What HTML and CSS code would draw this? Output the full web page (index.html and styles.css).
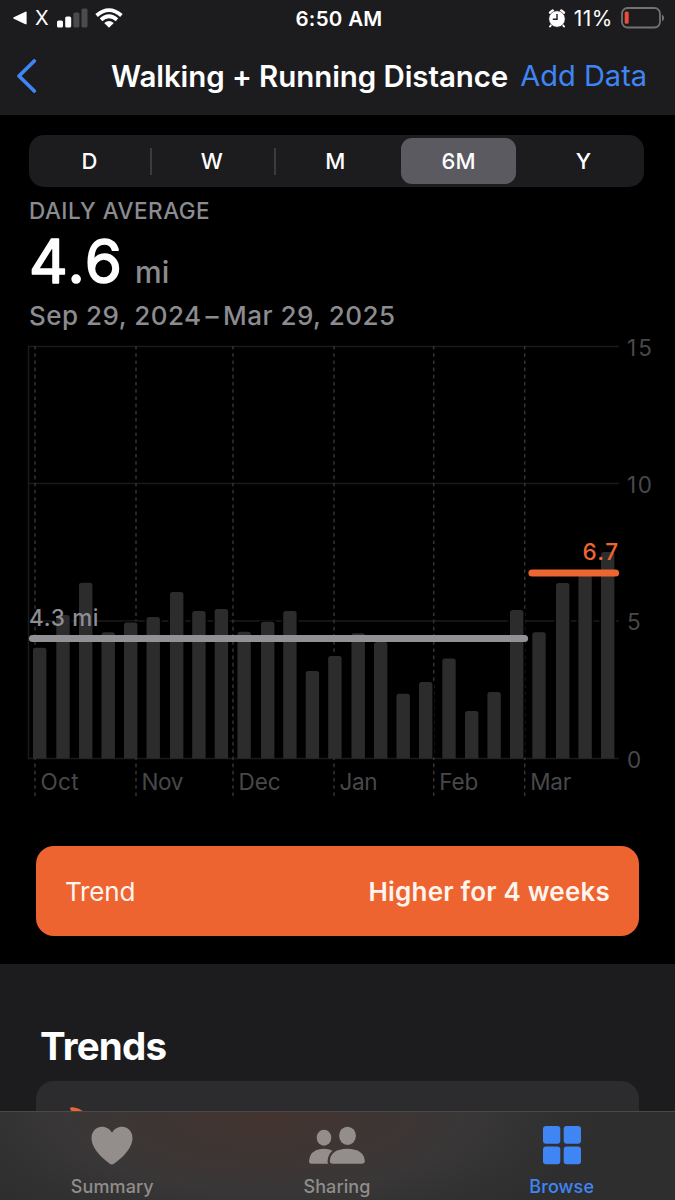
FILE: index.html
```html
<!DOCTYPE html>
<html lang="en">
<head>
    <meta charset="UTF-8">
    <meta name="viewport" content="width=device-width, initial-scale=1.0">
    <title>Walking + Running Distance</title>
    <link rel="stylesheet" href="styles.css">
</head>
<body>
    <header>
        <div class="status-bar">
            <div class="status-left">
                <svg width="14" height="14" viewBox="0 0 14 14"><path d="M0.8 6.2L12.4 0.7Q13.6 0.3 13.6 1.5V12.5Q13.6 13.7 12.4 13.2L0.8 7.8Q-.4 7 .8 6.2Z" fill="#fff"/></svg>
                <span class="back-app">X</span>
                <svg class="signal" width="31" height="20" viewBox="0 0 31 20">
                    <rect x="0" y="12.5" width="6" height="7" rx="1.6" fill="#fff"/>
                    <rect x="8.2" y="8.5" width="6" height="11" rx="1.6" fill="#fff"/>
                    <rect x="16.4" y="4.5" width="6" height="15" rx="1.6" fill="#4b4b4d"/>
                    <rect x="24.5" y="0.5" width="6" height="19" rx="1.6" fill="#4b4b4d"/>
                </svg>
                <svg class="wifi" width="28" height="20" viewBox="0 0 28 20">
                    <path d="M1.6 7.5Q14-3.2 26.4 7.5M6 11.8Q14 4.8 22 11.8" fill="none" stroke="#fff" stroke-width="3.8"/>
                    <path d="M14 19.7L9.2 14.9Q14 11 18.8 14.9Z" fill="#fff"/>
                </svg>
            </div>
            <span class="time">6:50 AM</span>
            <div class="status-right">
                <svg width="18" height="19" viewBox="0 0 18 19">
                    <path d="M2.4 3.6L4.6 1.8M15.6 3.6L13.4 1.8" stroke="#fff" stroke-width="3" stroke-linecap="round"/>
                    <path d="M4 15L2 17.5M14 15L16 17.5" stroke="#fff" stroke-width="2" stroke-linecap="round"/>
                    <circle cx="9" cy="10" r="8.2" fill="#fff" stroke="#1c1c1e" stroke-width=".6"/>
                    <path d="M9 5V10.2H4.8" fill="none" stroke="#1c1c1e" stroke-width="1.4"/>
                </svg>
                <span class="percent">11%</span>
                <svg width="44" height="22" viewBox="0 0 44 22">
                    <rect x="1" y="1" width="38" height="19.5" rx="5.5" fill="none" stroke="#727274" stroke-width="1.8"/>
                    <rect x="3.7" y="4.5" width="4" height="12.3" rx="1.5" fill="#eb4d3d"/>
                    <path d="M41 7.5Q43.2 8.5 43.2 11Q43.2 13.2 41 14.3Z" fill="#727274"/>
                </svg>
            </div>
        </div>
        <nav class="nav-bar">
            <svg class="back" width="22" height="36" viewBox="0 0 22 36"><path d="M18.3 3L3 18L18.3 33" fill="none" stroke="#3f85f4" stroke-width="3.8" stroke-linecap="round" stroke-linejoin="round"/></svg>
            <h1>Walking + Running Distance</h1>
            <a class="add-data">Add Data</a>
        </nav>
    </header>

    <main>
        <div class="range">
            <div class="range-item">D</div>
            <div class="range-item divided">W</div>
            <div class="range-item divided">M</div>
            <div class="range-item selected">6M</div>
            <div class="range-item">Y</div>
        </div>
        <div class="label">DAILY AVERAGE</div>
        <svg class="value" width="160" height="76" viewBox="0 -8 160 76">
            <text class="number" x="0" y="52" textLength="93">4.6</text>
            <text class="unit" x="106" y="52">mi</text>
        </svg>
        <div class="dates">Sep 29, 2024<span class="dash">–</span>Mar 29, 2025</div>

        <svg class="chart" id="chart" width="675" height="484" viewBox="0 330 675 484"></svg>

        <div class="trend">
            <span class="trend-name">Trend</span>
            <span class="trend-text">Higher for 4 weeks</span>
        </div>
    </main>

    <section class="trends">
        <h2>Trends</h2>
        <div class="card">
            <svg width="30" height="30" viewBox="0 0 30 30"><path d="M0 1.5Q0 0 3 .2Q14 1.5 19 12L8 16Z" fill="#ed6631"/></svg>
        </div>
    </section>

    <footer class="tab-bar">
        <div class="tab">
            <svg width="42" height="40" viewBox="0 0 42 40"><path d="M21 38.7C17 37 .5 24.5 .5 12.2C.5 5 5.5 .8 11 .8C15.5 .8 19 3.2 21 6.8C23 3.2 26.5 .8 31 .8C36.5 .8 41.5 5 41.5 12.2C41.5 24.5 25 37 21 38.7Z" fill="#938e8c"/></svg>
            <span>Summary</span>
        </div>
        <div class="tab">
            <svg width="58" height="40" viewBox="0 0 58 40" fill="#938e8c">
                <ellipse cx="16" cy="11.7" rx="7.3" ry="8"/>
                <ellipse cx="39.5" cy="9.8" rx="8.4" ry="9.1"/>
                <path d="M1 35Q1.5 24.5 13 22.9Q20 22.3 24.5 24.8Q19.7 28.8 19.5 35.5Q19.5 37 20.3 37.8H3.5Q1 37.8 1 35Z"/>
                <path d="M21.8 35Q22.5 23 39.3 22.7Q56 23 56.8 35Q56.8 37.8 53.8 37.8H24.8Q21.8 37.8 21.8 35Z"/>
            </svg>
            <span>Sharing</span>
        </div>
        <div class="tab active">
            <svg width="38" height="40" viewBox="0 0 38 40" fill="#3f85f4">
                <rect x="0" y="0" width="17.3" height="17.8" rx="3"/>
                <rect x="20.7" y="0" width="17.3" height="17.8" rx="3"/>
                <rect x="0" y="20.6" width="17.3" height="17.6" rx="3"/>
                <rect x="20.7" y="20.6" width="17.3" height="17.6" rx="3"/>
            </svg>
            <span>Browse</span>
        </div>
    </footer>

    <script src="chart.js"></script>
</body>
</html>
```

FILE: chart.js
```js
const chart = document.getElementById('chart');
const base = 758.5;

// Left edge and top of each weekly bar
const bars = [
    [33, 647.7], [56.3, 615], [79, 582.8], [101.5, 632.3], [124, 622.5], [146.5, 617],
    [170, 592], [192.2, 611], [214.7, 609], [237.4, 631.7], [261, 621.7], [283.2, 611],
    [305.7, 671], [328.2, 656], [351.5, 633.3], [374, 642], [396.5, 693.7], [419, 682],
    [442.3, 658.5], [465, 711], [487.4, 692], [510, 610], [532.3, 632.3], [556, 583],
    [578.4, 575], [601, 552]
];
const months = [
    ['Oct', 35, 38], ['Nov', 136, 42], ['Dec', 233, 42],
    ['Jan', 334, 38], ['Feb', 433.7, 39], ['Mar', 524.7, 41]
];
const levels = [[15, 346.5, 25], [10, 483.5, 25], [5, 621, 13], [0, base, 13]];

let svg = `<path class="axis" d="M28.5 346V${base}"/>`;

levels.forEach(([value, y, width]) => {
    svg += `<path class="axis" d="M28 ${y}H619"/>`;
    svg += `<text class="tick" x="627" y="${y + 9}" textLength="${width}">${value}</text>`;
});

months.forEach(([name, x, width]) => {
    svg += `<path class="month-line" d="M${x} 346V796"/>`;
    svg += `<text class="tick" x="${x + 5.5}" y="790" textLength="${width}">${name}</text>`;
});

bars.forEach(([x, y]) => {
    svg += `<rect class="gap" x="${x - 1.7}" y="${y - 1}" width="16.8" height="${base - y}"/>`;
    svg += `<path class="bar" d="M${x} ${base}V${y + 2.5}q0-2.5 2.5-2.5h8.4q2.5 0 2.5 2.5V${base}Z"/>`;
});

// Averages
svg += '<path class="average" d="M32.5 638.5H524.5"/>';
svg += '<text class="average-label" x="29" y="626" textLength="69.5">4.3 mi</text>';
svg += '<path class="average recent" d="M532 573H615.5"/>';
svg += '<text class="average-label recent-label" x="582.5" y="560" textLength="35.5">6.7</text>';

chart.innerHTML = svg;
```

FILE: styles.css
```css
* {
    box-sizing: border-box;
}

body {
    margin: 0;
    width: 675px;
    height: 1200px;
    overflow: hidden;
    display: flex;
    flex-direction: column;
    background-color: #000;
    color: #fff;
    font-family: Inter, "Liberation Sans", sans-serif;
}

svg {
    display: block;
    flex: none;
}

header {
    height: 115px;
    background-color: #1c1c1e;
}

.status-bar {
    height: 36px;
    padding: 0 10px 0 13px;
    display: grid;
    grid-template-columns: 1fr auto 1fr;
    align-items: center;
}

.status-left,
.status-right {
    display: flex;
    align-items: center;
}

.status-right {
    justify-content: flex-end;
    gap: 8px;
}

.back-app {
    font-size: 20px;
    margin: 0 8px;
}

.wifi {
    margin-left: 7px;
}

.time {
    font-size: 20.5px;
    font-weight: 600;
    letter-spacing: 0.3px;
}

.percent {
    font-size: 21px;
    letter-spacing: 0.5px;
}

.nav-bar {
    height: 79px;
    padding: 0 29px 0 16px;
    display: flex;
    align-items: center;
}

h1 {
    margin: 0 12px 0 73px;
    font-size: 29.5px;
    font-weight: 600;
    letter-spacing: -0.08px;
    white-space: nowrap;
}

.add-data {
    color: #3f85f4;
    font-size: 29px;
    white-space: nowrap;
}

main {
    height: 849px;
    padding-top: 20px;
}

.range {
    display: flex;
    height: 52px;
    margin: 0 31px 0 29px;
    padding: 3px 0;
    border-radius: 15px;
    background-color: #1c1c1f;
}

.range-item {
    flex: 1;
    display: flex;
    align-items: center;
    justify-content: center;
    font-size: 22px;
    font-weight: 500;
}

.range-item:first-child {
    flex: 0 0 121px;
}

.divided {
    background: linear-gradient(#3b3b3e, #3b3b3e) left center / 2px 27px no-repeat;
}

.selected {
    flex: 0 0 115px;
    margin: 0 4px;
    border-radius: 11px;
    background-color: #5b5a60;
}

.range-item:last-child {
    flex: 0 0 124px;
    padding-left: 3px;
}

.label {
    margin: 9px 0 0 29px;
    font-size: 22.5px;
    line-height: 30px;
    font-weight: 500;
    letter-spacing: 0.5px;
    color: #8b8b90;
}

.value {
    margin-left: 29px;
    margin-top: -3px;
}

.number {
    font-size: 60px;
    font-weight: 400;
    fill: #fff;
    stroke: #fff;
    stroke-width: 1.6;
    stroke-linejoin: round;
}

.unit {
    font-size: 30px;
    font-weight: 500;
    fill: #8b8b90;
}

.dates {
    margin: 0 0 0 29px;
    font-size: 26px;
    line-height: 33px;
    font-weight: 500;
    letter-spacing: 0.48px;
    color: #8b8b90;
}

.dash {
    margin: 0 4px;
}

.chart {
    margin-top: -2px;
}

.axis {
    stroke: #1b1b1d;
    stroke-width: 1.5;
}

.month-line {
    stroke: #333335;
    stroke-width: 1.5;
    stroke-dasharray: 3.6 3.6;
}

.tick {
    font-size: 22.5px;
    fill: #48484b;
}

.gap {
    fill: #000;
}

.bar {
    fill: #2c2c2d;
}

.average {
    stroke: #929195;
    stroke-width: 7.2;
    stroke-linecap: round;
}

.average-label {
    font-size: 22.5px;
    font-weight: 500;
    fill: #8f8e93;
}

.recent {
    stroke: #ed6631;
}

.recent-label {
    fill: #ed6631;
}

.trend {
    height: 90px;
    margin: 32px 36px 0;
    padding: 0 29px;
    display: flex;
    align-items: center;
    justify-content: space-between;
    border-radius: 18px;
    background-color: #ed6430;
    color: #fff5ee;
    font-size: 26px;
}

.trend-name {
    letter-spacing: -0.2px;
}

.trend-text {
    font-weight: 600;
    letter-spacing: 0.2px;
}

.trends {
    height: 147px;
    padding: 58px 36px 0;
    background-color: #1c1c1e;
}

h2 {
    margin: 0;
    padding-left: 4px;
    font-size: 38.5px;
    line-height: 48px;
    font-weight: 700;
    letter-spacing: -0.8px;
}

.card {
    height: 30px;
    margin-top: 11px;
    padding: 26px 0 0 34px;
    overflow: hidden;
    border-radius: 18px 18px 0 0;
    background-color: #2c2c2e;
}

.tab-bar {
    height: 89px;
    padding-right: 1px;
    display: flex;
    border-top: 1px solid #4b4948;
    background: radial-gradient(ellipse 330px 130px at 265px 0, #44342f, #3c3635 45%, #393737 60%, #2e2e2f 100%);
}

.tab {
    flex: 1;
    padding-top: 14px;
    display: flex;
    flex-direction: column;
    align-items: center;
    gap: 10px;
    color: #918d8b;
    font-size: 18px;
    line-height: 22px;
    font-weight: 500;
    letter-spacing: 0.1px;
}

.active {
    color: #3f85f4;
}
```
